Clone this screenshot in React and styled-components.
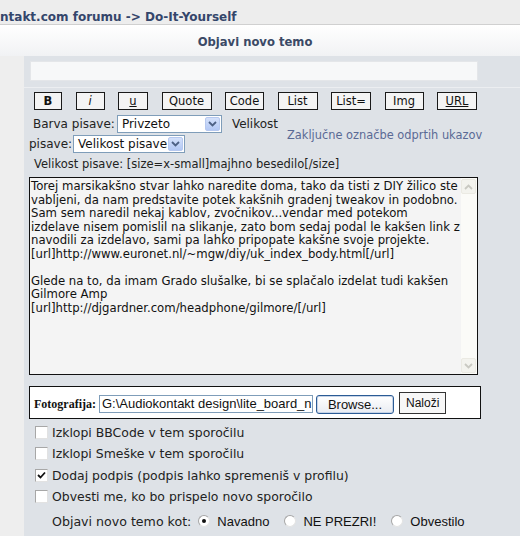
import React from "react";
import styled, { createGlobalStyle } from "styled-components";

const Global = createGlobalStyle`
  html, body { margin: 0; padding: 0; background: #dee2e7; }
  body { width: 520px; height: 536px; overflow: hidden; font-family: "DejaVu Sans", Verdana, sans-serif; }
`;

const Page = styled.div`
  display: flex;
  flex-direction: column;
  height: 536px;
`;

const Crumbs = styled.div`
  height: 25px;
  box-sizing: border-box;
  padding-top: 10px;
  background: #ededed;
  border-bottom: 1px solid #d0d0d0;
  font: bold 12px "DejaVu Sans", Verdana, sans-serif;
  color: #34466b;
  white-space: nowrap;
  overflow: hidden;
`;

const TitleRow = styled.div`
  height: 31px;
  display: flex;
  align-items: center;
  justify-content: center;
  padding: 3px 10px 0 0;
  box-sizing: border-box;
  background: linear-gradient(#ffffff, #f1f2f4);
  font: bold 11.6px "DejaVu Sans", Verdana, sans-serif;
  color: #3b4966;
`;

const Body = styled.div`
  flex: 1;
  display: grid;
  grid-template-columns: 24px 1fr;
`;

const Side = styled.div`
  background: #eeeeee;
`;

const Main = styled.div`
  background: #dee2e7;
  display: flex;
  flex-direction: column;
`;

const SubjectRow = styled.div`
  height: 32px;
  box-sizing: border-box;
  padding: 5px 0 0 6px;
  border-bottom: 1px solid #eceef1;
`;

const SubjectInput = styled.div`
  width: 448px;
  height: 20px;
  box-sizing: border-box;
  background: #f7f8f9;
  border: 1px solid #e4e6e9;
`;

const ButtonRow = styled.div`
  height: 25px;
  box-sizing: border-box;
  padding: 4px 0 0 10px;
  display: flex;
  gap: 13.5px;
`;

const TagButton = styled.div`
  width: ${(p) => p.$w}px;
  height: 18px;
  box-sizing: border-box;
  border: 1px solid #1a1a1a;
  background: #f4f4f4;
  display: flex;
  align-items: center;
  justify-content: center;
  font-size: 11.5px;
  color: #111;
  font-weight: ${(p) => (p.$bold ? "bold" : "normal")};
  font-style: ${(p) => (p.$italic ? "italic" : "normal")};
  text-decoration: ${(p) => (p.$under ? "underline" : "none")};
`;

const FontRow = styled.div`
  height: 41px;
  display: flex;
  align-items: center;
`;

const FontLines = styled.div`
  width: 263px;
  display: flex;
  flex-direction: column;
`;

const FontLine = styled.div`
  height: 20px;
  display: flex;
  align-items: center;
  padding-left: ${(p) => p.$indent}px;
  font-size: 12px;
  color: #222;
  white-space: nowrap;
`;

const SelectBox = styled.div`
  width: ${(p) => p.$w}px;
  height: 18px;
  box-sizing: border-box;
  margin: 0 ${(p) => p.$mr || 0}px 0 ${(p) => p.$ml || 0}px;
  border: 1px solid #7f9db9;
  background: #fff;
  display: flex;
  align-items: center;
  justify-content: space-between;
  padding: 0 1px 0 4px;
  font-size: 12px;
  color: #111;
`;

const SelectArrow = styled.span`
  width: 15px;
  height: 14px;
  border-radius: 2px;
  background: linear-gradient(#d4e1fb, #b3c8f5);
  border: 1px solid #b6c8ef;
  box-sizing: border-box;
  display: flex;
  align-items: center;
  justify-content: center;
`;

const HelpLink = styled.div`
  font-size: 11.4px;
  color: #5a6a95;
  white-space: nowrap;
  padding-top: 2px;
`;

const Hint = styled.div`
  height: 20px;
  display: flex;
  align-items: center;
  padding-left: 10px;
  font-size: 11.5px;
  color: #222;
`;

const EditorBox = styled.div`
  margin: 3px 0 0 5px;
  width: 449px;
  height: 198px;
  box-sizing: border-box;
  border: 1px solid #111;
  background: #f4f4f4;
  display: flex;
`;

const EditorText = styled.textarea`
  flex: 1;
  border: none;
  outline: none;
  resize: none;
  background: transparent;
  margin: 0;
  padding: 2px 1px;
  font: 11.7px/13.5px "DejaVu Sans", Verdana, sans-serif;
  color: #111;
  white-space: pre;
  overflow: hidden;
`;

const ScrollBar = styled.div`
  width: 16px;
  background: #fbfbf8;
  display: flex;
  flex-direction: column;
  justify-content: space-between;
  padding: 1px 0 1px 0;
  box-sizing: border-box;
`;

const ScrollBtn = styled.div`
  width: 15px;
  height: 15px;
  box-sizing: border-box;
  border: 1px solid #ebeae3;
  border-radius: 2px;
  background: #f3f3ee;
  display: flex;
  align-items: center;
  justify-content: center;
`;

const UploadBox = styled.div`
  margin: 11px 0 0 5px;
  width: 452px;
  height: 33px;
  box-sizing: border-box;
  border: 1px solid #111;
  background: #fff;
  display: flex;
  align-items: flex-end;
  padding: 0 0 4px 4px;
`;

const UploadLabel = styled.span`
  font: bold 12px "Liberation Serif", "Times New Roman", serif;
  color: #111;
  margin-bottom: 2px;
`;

const FileInput = styled.div`
  width: 214px;
  height: 18px;
  box-sizing: border-box;
  margin-left: 3px;
  border: 1px solid #7f9db9;
  background: #fff;
  font: 13px "Liberation Sans", Arial, sans-serif;
  color: #111;
  white-space: nowrap;
  overflow: hidden;
  padding: 0 0 0 2px;
  line-height: 16px;
  margin-bottom: 1px;
`;

const BrowseBtn = styled.div`
  width: 78px;
  height: 19px;
  box-sizing: border-box;
  margin-left: 3px;
  border: 1px solid #2b5b95;
  border-radius: 3px;
  background: linear-gradient(#ffffff, #e9ecf2);
  box-shadow: inset 0 0 0 1px #c6d3e6;
  font: 13px "Liberation Sans", Arial, sans-serif;
  color: #111;
  display: flex;
  align-items: center;
  justify-content: center;
`;

const SubmitBtn = styled.div`
  height: 22px;
  box-sizing: border-box;
  margin: 5px 0 0 5px;
  padding: 0 6px;
  border: 1px solid #333;
  background: #f7f7f7;
  font: 12px "Liberation Sans", Arial, sans-serif;
  color: #111;
  display: flex;
  align-items: center;
  align-self: flex-start;
`;

const Options = styled.div`
  margin-top: 3px;
  display: flex;
  flex-direction: column;
`;

const OptionRow = styled.label`
  height: 21.3px;
  display: flex;
  align-items: center;
  padding-left: 11px;
  gap: 4px;
  font-size: 12.45px;
  color: #222;
`;

const Box = styled.span`
  width: 13px;
  height: 13px;
  box-sizing: border-box;
  border: 1px solid;
  border-color: #a7a7a7 #e2e2e2 #e2e2e2 #a7a7a7;
  background: #fff;
  display: flex;
  align-items: center;
  justify-content: center;
`;

const RadioRow = styled.div`
  margin-top: 3px;
  height: 22px;
  display: flex;
  align-items: center;
  padding-left: 28px;
  font-size: 12.6px;
  color: #222;
  white-space: nowrap;
`;

const RadioItem = styled.span`
  display: flex;
  align-items: center;
  margin-left: ${(p) => p.$ml}px;
  font: 13px "Liberation Sans", Arial, sans-serif;
  color: #111;
`;

const RadioDot = styled.span`
  width: 12px;
  height: 12px;
  box-sizing: border-box;
  border-radius: 50%;
  border: 1px solid;
  border-color: #a5a5a5 #e3e3e3 #e3e3e3 #a5a5a5;
  background: #fff;
  margin-right: 7px;
  display: flex;
  align-items: center;
  justify-content: center;
  &::after {
    content: "";
    width: 4px;
    height: 4px;
    border-radius: 50%;
    background: ${(p) => (p.$on ? "#111" : "transparent")};
  }
`;

const Chevron = ({ up, color = "#4d6185" }) => (
  <svg width="9" height="6" viewBox="0 0 9 6">
    <path
      d={up ? "M1 5 L4.5 1.5 L8 5" : "M1 1 L4.5 4.5 L8 1"}
      fill="none"
      stroke={color}
      strokeWidth="1.8"
    />
  </svg>
);

const Select = ({ w, ml, mr, children }) => (
  <SelectBox $w={w} $ml={ml} $mr={mr}>
    <span>{children}</span>
    <SelectArrow>
      <Chevron />
    </SelectArrow>
  </SelectBox>
);

const Check = ({ on, children }) => (
  <OptionRow>
    <Box>
      {on && (
        <svg width="9" height="9" viewBox="0 0 9 9">
          <path d="M1 4 L3.5 6.5 L8 1.5" fill="none" stroke="#111" strokeWidth="1.8" />
        </svg>
      )}
    </Box>
    {children}
  </OptionRow>
);

const buttons = [
  { t: "B", w: 28, bold: true },
  { t: "i", w: 29, italic: true },
  { t: "u", w: 30, under: true },
  { t: "Quote", w: 50 },
  { t: "Code", w: 39 },
  { t: "List", w: 40 },
  { t: "List=", w: 40 },
  { t: "Img", w: 39 },
  { t: "URL", w: 40, under: true },
];

const message = `Torej marsikakšno stvar lahko naredite doma, tako da tisti z DIY žilico ste
vabljeni, da nam predstavite potek kakšnih gradenj tweakov in podobno.
Sam sem naredil nekaj kablov, zvočnikov...vendar med potekom
izdelave nisem pomislil na slikanje, zato bom sedaj podal le kakšen link z
navodili za izdelavo, sami pa lahko pripopate kakšne svoje projekte.
[url]http://www.euronet.nl/~mgw/diy/uk_index_body.html[/url]

Glede na to, da imam Grado slušalke, bi se splačalo izdelat tudi kakšen
Gilmore Amp
[url]http://djgardner.com/headphone/gilmore/[/url]`;

export default function App() {
  return (
    <Page>
      <Global />
      <Crumbs>ntakt.com forumu -&gt; Do-It-Yourself</Crumbs>
      <TitleRow>Objavi novo temo</TitleRow>
      <Body>
        <Side />
        <Main>
          <SubjectRow>
            <SubjectInput />
          </SubjectRow>
          <ButtonRow>
            {buttons.map((b) => (
              <TagButton key={b.t} $w={b.w} $bold={b.bold} $italic={b.italic} $under={b.under}>
                {b.t}
              </TagButton>
            ))}
          </ButtonRow>
          <FontRow>
            <FontLines>
              <FontLine $indent={9}>
                Barva pisave:
                <Select w={105} ml={2} mr={10}>Privzeto</Select>
                Velikost
              </FontLine>
              <FontLine $indent={5}>
                pisave:
                <Select w={112} ml={1}>Velikost pisave</Select>
              </FontLine>
            </FontLines>
            <HelpLink>Zaključne označbe odprtih ukazov</HelpLink>
          </FontRow>
          <Hint>Velikost pisave: [size=x-small]majhno besedilo[/size]</Hint>
          <EditorBox>
            <EditorText readOnly wrap="off" defaultValue={message} />
            <ScrollBar>
              <ScrollBtn>
                <Chevron up color="#c9c9c2" />
              </ScrollBtn>
              <ScrollBtn>
                <Chevron color="#c9c9c2" />
              </ScrollBtn>
            </ScrollBar>
          </EditorBox>
          <UploadBox>
            <UploadLabel>Fotografija:</UploadLabel>
            <FileInput>G:\Audiokontakt design\lite_board_n</FileInput>
            <BrowseBtn>Browse...</BrowseBtn>
            <SubmitBtn>Naloži</SubmitBtn>
          </UploadBox>
          <Options>
            <Check>Izklopi BBCode v tem sporočilu</Check>
            <Check>Izklopi Smeške v tem sporočilu</Check>
            <Check on>Dodaj podpis (podpis lahko spremeniš v profilu)</Check>
            <Check>Obvesti me, ko bo prispelo novo sporočilo</Check>
          </Options>
          <RadioRow>
            Objavi novo temo kot:
            <RadioItem $ml={7}>
              <RadioDot $on />
              Navadno
            </RadioItem>
            <RadioItem $ml={15}>
              <RadioDot />
              NE PREZRI!
            </RadioItem>
            <RadioItem $ml={15}>
              <RadioDot />
              Obvestilo
            </RadioItem>
          </RadioRow>
        </Main>
      </Body>
    </Page>
  );
}
